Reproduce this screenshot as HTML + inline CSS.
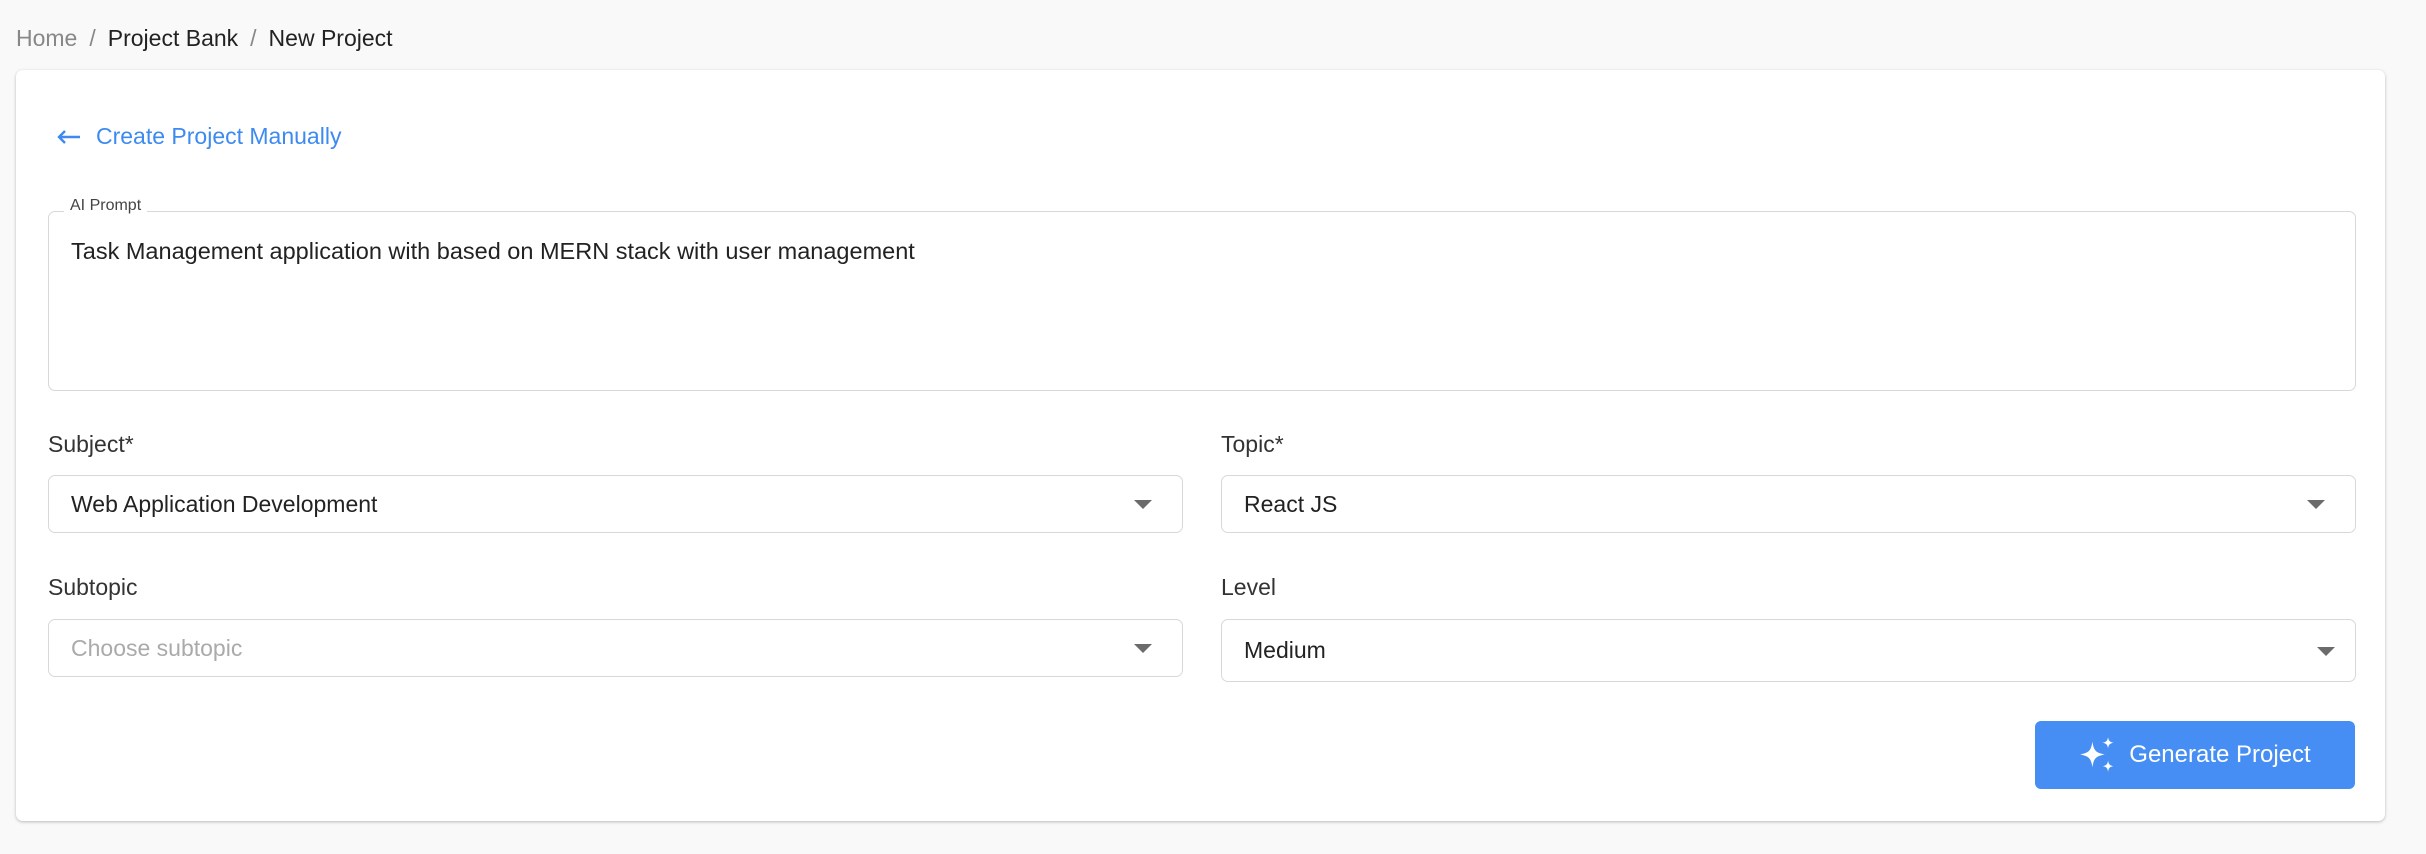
<!DOCTYPE html>
<html><head><style>
*{box-sizing:border-box;margin:0;padding:0}
body{width:2426px;height:854px;background:#f9f9f9;font-family:"Liberation Sans",sans-serif;position:relative;overflow:hidden;color:#222}
.a{position:absolute}
.crumb{top:25px;left:16px;font-size:23px;color:#222;white-space:nowrap}
.crumb .h{color:#888}.crumb .s{color:#888;margin:0 12px}
.card{left:16px;top:70px;width:2369px;height:751px;background:#fff;border-radius:7px;box-shadow:0 1px 3px rgba(0,0,0,.25)}
.box{border:1.5px solid #d8d8d8;border-radius:7px;background:#fff}
.lab{font-size:23px;color:#333}
.sel{font-size:23px;color:#222;padding-left:22px;display:flex;align-items:center}
.tri{position:absolute;right:30px;top:50%;margin-top:-4px;width:0;height:0;border-left:9px solid transparent;border-right:9px solid transparent;border-top:9px solid #6b6b6b}
</style></head><body>
<div class="a crumb"><span class="h">Home</span><span class="s">/</span>Project Bank<span class="s">/</span>New Project</div>
<div class="a card"></div>
<svg class="a" style="left:56px;top:129px" width="26" height="16" viewBox="0 0 26 16"><path d="M24 8H3M9 2L3 8L9 14" stroke="#3d8af0" stroke-width="2.4" fill="none"/></svg>
<div class="a" style="left:96px;top:123px;font-size:23px;color:#3d8af0;white-space:nowrap">Create Project Manually</div>
<div class="a box" style="left:48px;top:211px;width:2308px;height:180px"></div>
<div class="a" style="left:64px;top:197px;background:#fff;padding:0 6px;font-size:16px;color:#444">AI Prompt</div>
<div class="a" style="left:71px;top:238px;font-size:23.5px">Task Management application with based on MERN stack with user management</div>
<div class="a lab" style="left:48px;top:431px">Subject*</div>
<div class="a lab" style="left:1221px;top:431px">Topic*</div>
<div class="a box sel" style="left:48px;top:475px;width:1135px;height:58px">Web Application Development<span class="tri"></span></div>
<div class="a box sel" style="left:1221px;top:475px;width:1135px;height:58px">React JS<span class="tri"></span></div>
<div class="a lab" style="left:48px;top:574px">Subtopic</div>
<div class="a lab" style="left:1221px;top:574px">Level</div>
<div class="a box sel" style="left:48px;top:619px;width:1135px;height:58px;color:#aaa">Choose subtopic<span class="tri"></span></div>
<div class="a box sel" style="left:1221px;top:619px;width:1135px;height:63px">Medium<span class="tri" style="right:20px"></span></div>
<div class="a" style="left:2035px;top:721px;width:320px;height:68px;background:#468ef3;border-radius:6px;color:#fff;font-size:24px;display:flex;align-items:center;justify-content:center;gap:12px">
<svg width="38" height="38" viewBox="0 0 34 34" fill="#fff"><path d="M12 5 C13.2 13 15 15 23 16.5 C15 18 13.2 20 12 28 C10.8 20 9 18 1 16.5 C9 15 10.8 13 12 5Z"/><path d="M26 1 C26.6 4.5 27.5 5.4 31 6 C27.5 6.6 26.6 7.5 26 11 C25.4 7.5 24.5 6.6 21 6 C24.5 5.4 25.4 4.5 26 1Z"/><path d="M26 22 C26.6 25.5 27.5 26.4 31 27 C27.5 27.6 26.6 28.5 26 32 C25.4 28.5 24.5 27.6 21 27 C24.5 26.4 25.4 25.5 26 22Z"/></svg>Generate Project</div>
</body></html>
